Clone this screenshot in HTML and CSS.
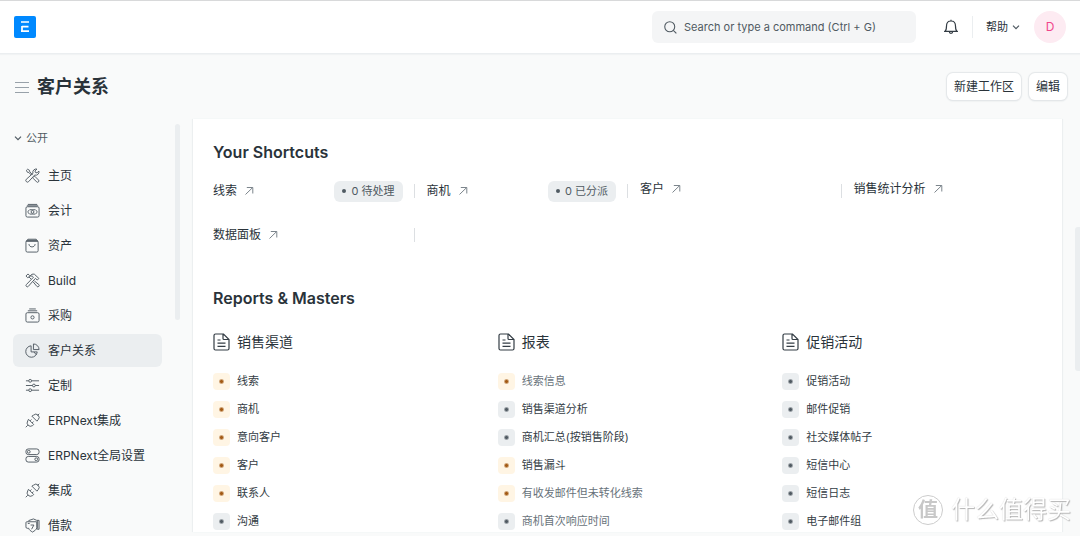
FILE: index.html
```html
<!DOCTYPE html>
<html lang="zh-CN">
<head>
<meta charset="utf-8">
<title>客户关系</title>
<link rel="stylesheet" href="styles.css">
</head>
<body>
<svg class="sprite" aria-hidden="true">
  <symbol id="arrow" viewBox="0 0 10 10"><path d="M1.500 8.500L8.500 1.700M2.800 1.500h6v6"/></symbol>
  <symbol id="chevron" viewBox="0 0 8 8"><path d="M1 2.600l3 3 3-3"/></symbol>
  <symbol id="file" viewBox="0 0 17 18"><path d="M2.500 1h8L16 6.500V15.500a1.500 1.500 0 0 1-1.500 1.500h-12A1.500 1.500 0 0 1 1 15.500v-13A1.500 1.500 0 0 1 2.500 1zM10 1v4.500a1 1 0 0 0 1 1h5M4.500 7h3M4.500 10.200h8M4.500 13.300h8"/></symbol>
  <symbol id="tools" viewBox="0 0 16 16"><path d="M1.500 2.500l1.300-1.200 2 1.200.3 1.600 3 3M1.500 2.500l1 2 1.600.3L6.800 7.500M9.600 9.100l.8-.3 4 4a1.400 1.400 0 0 1-2 2l-3.800-3.900.1-.9M12.800 1.200a3.500 3.500 0 0 0-4.300 4.500L1.400 12a1.700 1.700 0 1 0 2.500 2.500l6.400-7a3.500 3.500 0 0 0 4.500-4.300l-2 2-1.700-.5-.5-1.600z"/></symbol>
  <symbol id="money" viewBox="0 0 16 16"><rect x="1" y="4" width="14" height="11" rx="1.500"/><path d="M3 1.500h10M2 3h12M3 9.500c0-1.200 1.300-1.200 2-2.300h6c.7 1.100 2 1.100 2 2.300s-1.300 1.200-2 2.300H5c-.7-1.100-2-1.100-2-2.300z"/><circle cx="8" cy="9.500" r="1.500"/></symbol>
  <symbol id="bag" viewBox="0 0 16 16"><rect x="1" y="3" width="13" height="12" rx="1.500"/><path d="M1.300 3.500l1.800-2.200h8.800l1.800 2.200zM2.200 2.400h10.600M4.200 6.500c.3 4 6.300 4 6.600 0"/></symbol>
  <symbol id="build" viewBox="0 0 16 16"><path d="M6.500 6.500L4.300 4.300 2.800 5 1 3.200 3.200 1l1.800 1.800-.7 1.500M8.700 9.500l4 4.800a1.400 1.400 0 0 0 2-2L10 8.500M5.500 3.300c1-1.800 2.500-2.500 4.500-2l4.800 4.500-1.700 1.700-2-1.800L3.500 14.300a1.400 1.400 0 0 1-2-2L9 4.500 7.700 3.300z"/></symbol>
  <symbol id="cashbox" viewBox="0 0 16 16"><rect x="1" y="5" width="14" height="10" rx="1.500"/><path d="M4.500 1h7M3 3h10"/><circle cx="8" cy="10" r="1.700"/></symbol>
  <symbol id="pie" viewBox="0 0 16 16"><path d="M6.500 3A6.100 6.100 0 1 0 13 9.500H6.500zM9 1v6h6a6 6 0 0 0-6-6zM9.500 9.500l2.500 3"/></symbol>
  <symbol id="sliders" viewBox="0 0 16 16"><path d="M1 3h3M7 3h8M1 8h7M11 8h4M1 13h3M7 13h8"/><circle cx="5.500" cy="3" r="1.500"/><circle cx="9.500" cy="8" r="1.500"/><circle cx="5.500" cy="13" r="1.500"/></symbol>
  <symbol id="plug" viewBox="0 0 16 16"><path d="M.8 15.200L3 13M13.300 2.700L15.200.8M3.700 6.700l5.600 5.600-1.400 1.200a3.600 3.600 0 0 1-5-5zM7.300 3.300l5.400 5.400 1.300-1.500a3.300 3.300 0 0 0-4.900-4.900zM5.400 8.400l1.500-1.500M7.600 10.600L9.100 9.100"/></symbol>
  <symbol id="toggles" viewBox="0 0 16 16"><rect x="1" y="1" width="14" height="6" rx="2.500"/><rect x="1" y="9" width="14" height="6" rx="2.500"/><circle cx="4" cy="4" r="1.500"/><circle cx="12" cy="12" r="1.500"/></symbol>
  <symbol id="loan" viewBox="0 0 16 16"><path d="M4 3.500V2.700L9 1l3.500 1.500H15V12h-2M2 4h10.500v6.500c0 2-2.500 3.200-4.500 4.500-2-1.300-3.500-2-4-4H2.500A1.500 1.500 0 0 1 1 9.500V5a1 1 0 0 1 1-1zM6 7.500h3.500L7 12M13.500 2.500v9M3 5.800h2"/></symbol>
</svg>

<header class="navbar">
  <a class="logo" href="#" aria-label="ERPNext">
    <svg viewBox="0 0 22 22"><rect width="22" height="22" rx="2" fill="#0089ff"/><path d="M7 6h8M8 10.700h6.500M7 15.200h8M8 10v5" stroke="#fff" stroke-width="1.700" fill="none"/></svg>
  </a>
  <label class="search">
    <svg viewBox="0 0 12 12"><circle cx="5.300" cy="5.300" r="4.600"/><path d="M8.600 8.600l2.800 2.800"/></svg>
    <input type="text" placeholder="Search or type a command (Ctrl + G)" aria-label="Search">
  </label>
  <button class="bell" type="button" aria-label="通知"><svg viewBox="0 0 14 16"><path d="M1 12.300c1.300-1 1.500-2.300 1.500-5.300 0-3 1.800-5 4.500-5s4.500 2 4.500 5c0 3 .2 4.300 1.500 5.300zM7 2V.8M5.300 12.500c0 2.400 3.400 2.400 3.400 0"/></svg></button>
  <button class="help" type="button">帮助 <svg class="chev"><use href="#chevron"/></svg></button>
  <button class="avatar" type="button">D</button>
</header>

<div class="page-head">
  <button class="menu" type="button" aria-label="菜单"><svg viewBox="0 0 14 12"><path d="M0 1.500h14M0 6.500h14M0 11.500h14"/></svg></button>
  <h1>客户关系</h1>
  <button class="btn" type="button">新建工作区</button>
  <button class="btn" type="button">编辑</button>
</div>

<div class="layout">
  <nav class="sidebar">
    <button class="group" type="button"><svg class="chev"><use href="#chevron"/></svg>公开</button>
    <a class="item" href="#"><svg><use href="#tools"/></svg>主页</a>
    <a class="item" href="#"><svg><use href="#money"/></svg>会计</a>
    <a class="item" href="#"><svg><use href="#bag"/></svg>资产</a>
    <a class="item" href="#"><svg><use href="#build"/></svg>Build</a>
    <a class="item" href="#"><svg><use href="#cashbox"/></svg>采购</a>
    <a class="item active" href="#"><svg><use href="#pie"/></svg>客户关系</a>
    <a class="item" href="#"><svg><use href="#sliders"/></svg>定制</a>
    <a class="item" href="#"><svg><use href="#plug"/></svg>ERPNext集成</a>
    <a class="item" href="#"><svg><use href="#toggles"/></svg>ERPNext全局设置</a>
    <a class="item" href="#"><svg><use href="#plug"/></svg>集成</a>
    <a class="item" href="#"><svg><use href="#loan"/></svg>借款</a>
  </nav>
  <div class="side-thumb"></div>
  <main class="workspace">
    <h2>Your Shortcuts</h2>
    <div class="shortcuts">
      <div class="shortcut"><a href="#">线索 <svg><use href="#arrow"/></svg></a><span class="pill">0 待处理</span></div>
      <div class="shortcut"><a href="#">商机 <svg><use href="#arrow"/></svg></a><span class="pill">0 已分派</span></div>
      <div class="shortcut plain"><a href="#">客户 <svg><use href="#arrow"/></svg></a></div>
      <div class="shortcut plain"><a href="#">销售统计分析 <svg><use href="#arrow"/></svg></a></div>
      <div class="shortcut"><a href="#">数据面板 <svg><use href="#arrow"/></svg></a></div>
    </div>
    <h2>Reports &amp; Masters</h2>
    <div class="cards">
      <section>
        <h3><svg><use href="#file"/></svg>销售渠道</h3>
        <ul>
          <li class="warm"><a href="#">线索</a></li>
          <li class="warm"><a href="#">商机</a></li>
          <li class="warm"><a href="#">意向客户</a></li>
          <li class="warm"><a href="#">客户</a></li>
          <li class="warm"><a href="#">联系人</a></li>
          <li><a href="#">沟通</a></li>
        </ul>
      </section>
      <section>
        <h3><svg><use href="#file"/></svg>报表</h3>
        <ul>
          <li class="warm muted"><a href="#">线索信息</a></li>
          <li><a href="#">销售渠道分析</a></li>
          <li><a href="#">商机汇总(按销售阶段)</a></li>
          <li class="warm"><a href="#">销售漏斗</a></li>
          <li class="warm muted"><a href="#">有收发邮件但未转化线索</a></li>
          <li class="muted"><a href="#">商机首次响应时间</a></li>
        </ul>
      </section>
      <section>
        <h3><svg><use href="#file"/></svg>促销活动</h3>
        <ul>
          <li><a href="#">促销活动</a></li>
          <li><a href="#">邮件促销</a></li>
          <li><a href="#">社交媒体帖子</a></li>
          <li><a href="#">短信中心</a></li>
          <li><a href="#">短信日志</a></li>
          <li><a href="#">电子邮件组</a></li>
        </ul>
      </section>
    </div>
  </main>
</div>
<div class="page-thumb"></div>
<div class="watermark"><span class="seal">值</span>什么值得买</div>
</body>
</html>
```

FILE: styles.css
```css
* { box-sizing: border-box; }

body {
  display: flex;
  flex-direction: column;
  height: 100vh;
  margin: 0;
  padding-bottom: 4px;
  overflow: hidden;
  background: #f9fafa;
  color: #2a333a;
  font-family: Inter, "Noto Sans CJK SC", sans-serif;
  font-size: 12px;
  line-height: 18px;
}

a { color: inherit; text-decoration: none; }
button { border: 0; padding: 0; background: none; color: inherit; font: inherit; }
svg { display: block; flex: none; fill: none; stroke: #505a62; stroke-width: 1; }
.sprite { position: absolute; width: 0; height: 0; }
.chev { width: 8px; height: 8px; stroke-width: 1.2; }

.navbar {
  display: flex;
  align-items: center;
  flex: none;
  height: 54px;
  padding: 0 14px;
  border-top: 1px solid #d8d9da;
  border-bottom: 1px solid #ebeef0;
  background: #fff;
  box-shadow: 0 1px 1px #f1f3f4;
}
.logo svg { width: 22px; height: 22px; stroke: none; }
.search {
  display: flex;
  align-items: center;
  gap: 7px;
  width: 264px;
  height: 32px;
  margin-left: auto;
  padding: 0 12px;
  border-radius: 6px;
  background: #f4f5f6;
}
.search svg { width: 13px; height: 13px; }
.search input {
  flex: 1;
  min-width: 0;
  padding: 0;
  border: 0;
  background: none;
  font: inherit;
  font-size: 11px;
}
.search input::placeholder { color: #505a62; opacity: 1; }
.bell { margin-left: 28px; padding-right: 14px; border-right: 1px solid #ebeef0; line-height: 22px; }
.bell svg { width: 14px; height: 22px; stroke-width: 1.2; stroke: #333c44; }
.help { display: flex; align-items: center; gap: 4px; margin-left: 13px; font-size: 11px; }
.avatar {
  width: 32px;
  height: 32px;
  margin-left: 14px;
  border-radius: 50%;
  background: #fdebf2;
  color: #f0468b;
}

.page-head { display: flex; align-items: center; flex: none; height: 65px; padding: 0 13px 0 15px; }
.menu svg { width: 14px; height: 12px; stroke: #98a1a9; }
h1 { margin: 0 auto 0 8px; font-size: 18px; line-height: 26px; }
.btn {
  height: 27px;
  margin-left: 8px;
  padding: 0 7px;
  border-radius: 6px;
  background: #fff;
  box-shadow: 0 0 1px 1px #e4e7e9, 0 1px 2px #dfe2e5;
}

.layout { display: flex; flex: 1; min-height: 0; padding: 0 18px 0 13px; }
.sidebar { display: flex; flex-direction: column; flex: none; gap: 2px; width: 149px; padding-top: 10px; }
.group { display: flex; align-items: center; gap: 4px; margin-bottom: 10px; padding-left: 1px; color: #505a62; font-size: 11px; }
.item { display: flex; align-items: center; flex: none; gap: 8px; height: 33px; padding-left: 12px; border-radius: 6px; }
.item svg { width: 15px; height: 15px; }
.active { background: #ebeef0; }
.side-thumb { flex: none; width: 5px; height: 196px; margin: 5px 13px 0; border-radius: 3px; background: #ebeef0; }
.page-thumb { position: fixed; top: 227px; right: 0; width: 5px; height: 144px; border-radius: 3px 0 0 3px; background: #ebeef0; }

.workspace {
  flex: 1;
  min-width: 0;
  padding: 22px 7px 0 20px;
  overflow: hidden;
  background: #fff;
  box-shadow: 1px 0 1px #eceff0, -1px 0 1px #eceff0;
}
h2 { margin: 0; font-size: 16px; font-weight: 600; line-height: 22px; }
.shortcuts {
  display: grid;
  grid-template-columns: repeat(4, 1fr);
  grid-auto-rows: 22px;
  gap: 22px 12px;
  margin: 17px 0 41px;
}
.shortcut {
  display: flex;
  align-items: center;
  justify-content: space-between;
  padding-right: 12px;
  background: linear-gradient(#dcdfe2, #dcdfe2) right center / 1px 14px no-repeat;
}
.shortcut:nth-child(4n) { background: none; }
.shortcut a { display: flex; align-items: center; gap: 7px; }
.shortcut a svg { width: 10px; height: 10px; stroke: #7c858c; }
.plain { padding-bottom: 4px; }
.pill { display: flex; align-items: center; gap: 5px; padding: 2px 8px; border-radius: 6px; background: #ebeef0; color: #505a62; font-size: 11px; line-height: 17px; }
.pill::before { content: ""; width: 4px; height: 4px; border-radius: 50%; background: #505a62; }

.cards { display: grid; grid-template-columns: repeat(3, 1fr); gap: 12px; margin-top: 22px; }
h3 { display: flex; align-items: center; gap: 7px; margin: 0; font-size: 14px; font-weight: 400; line-height: 22px; }
h3 svg { width: 17px; height: 18px; stroke: #333c44; stroke-width: 1.2; }
ul { margin: 14px 0 0; padding: 0; list-style: none; }
li { display: flex; align-items: center; gap: 7px; height: 28px; color: #333c44; font-size: 11px; }
li::before {
  content: "";
  width: 17px;
  height: 17px;
  border-radius: 4px;
  background: radial-gradient(circle, #505a62 1px, #ebeef0 3px);
}
.warm::before { background: radial-gradient(circle, #a35a14 1px, #fff5e4 3px); }
.muted { color: #68727a; }

.watermark {
  position: fixed;
  right: 9px;
  bottom: 9px;
  display: flex;
  align-items: center;
  gap: 8px;
  color: #fff;
  font-size: 24px;
  line-height: 34px;
  text-shadow: 1px 1px 1px #b4b4b4, 0 0 1px #ccc;
}
.seal {
  width: 30px;
  height: 30px;
  border: 1px solid #ccc;
  border-radius: 50%;
  color: #c8c8c8;
  font-size: 20px;
  font-weight: 700;
  line-height: 28px;
  text-align: center;
  text-shadow: none;
}
```
